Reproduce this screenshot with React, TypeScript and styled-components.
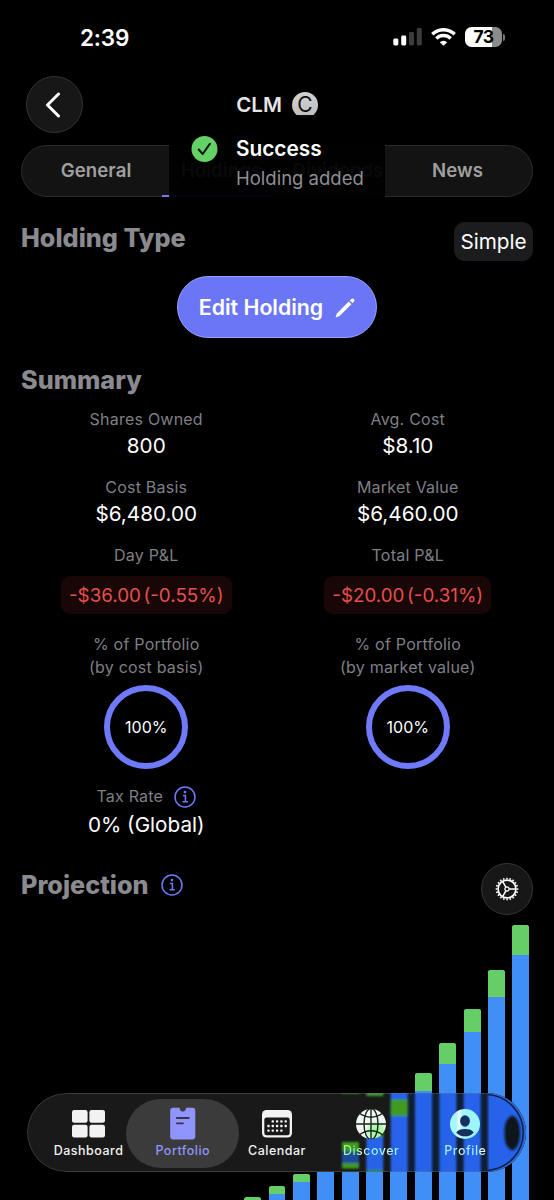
import React from "react";
import styled, { createGlobalStyle } from "styled-components";

const GlobalStyle = createGlobalStyle`
  * { box-sizing: border-box; }
  html, body { margin: 0; background: #000; }
  body {
    font-family: Inter, "Liberation Sans", sans-serif;
    color: #fff;
    overflow: hidden;
    -webkit-font-smoothing: antialiased;
  }
`;

const ACCENT = "#6f7afa";

const Screen = styled.main`
  position: relative;
  width: 554px;
  height: 1200px;
  overflow: hidden;
  background: #000;
  display: flex;
  flex-direction: column;
`;

const StatusBar = styled.div`
  height: 76px;
  flex: none;
  display: flex;
  justify-content: space-between;
  padding: 23px 49px 0 80px;
`;

const Clock = styled.span`
  font-size: 22.5px;
  font-weight: 600;
  line-height: 30px;
  letter-spacing: -0.2px;
`;

const StatusIcons = styled.div`
  display: flex;
  gap: 9px;
  height: 28px;
  align-items: center;
`;

const Battery = styled.div`
  display: flex;
  align-items: center;
  gap: 1px;
`;

const BatteryBody = styled.div`
  width: 37px;
  height: 20px;
  border-radius: 6.5px;
  background: linear-gradient(90deg, #fff 73%, #8b8b8b 73%);
  color: #000;
  font-size: 17.5px;
  font-weight: 700;
  line-height: 20px;
  text-align: center;
  letter-spacing: -0.6px;
`;

const BatteryCap = styled.div`
  width: 2px;
  height: 7px;
  border-radius: 0 2px 2px 0;
  background: #777;
`;

const NavBar = styled.header`
  height: 57px;
  flex: none;
  display: grid;
  grid-template-columns: 57px 1fr 57px;
  align-items: center;
  padding: 0 25.5px;
`;

const RoundButton = styled.button<{ $size: number }>`
  width: ${(p) => p.$size}px;
  height: ${(p) => p.$size}px;
  border-radius: 50%;
  border: 1px solid #343434;
  background: #171717;
  padding: 0;
  display: flex;
  align-items: center;
  justify-content: center;
`;

const NavTitle = styled.div`
  display: flex;
  align-items: center;
  justify-content: center;
  gap: 10px;
  font-size: 20.5px;
  font-weight: 600;
  color: #e4e4e4;
`;

const TickerBadge = styled.span`
  width: 26px;
  height: 26px;
  border-radius: 50%;
  background: linear-gradient(#d2d2d2, #bcbcbc);
  color: #111;
  font-size: 21px;
  font-weight: 400;
  line-height: 26px;
  text-align: center;
`;

const Segments = styled.nav`
  height: 52px;
  flex: none;
  margin: 12px 21px 0;
  padding: 0 21px 0 8px;
  border-radius: 26px;
  border: 1px solid #2b2b2b;
  background: #131313;
  display: grid;
  grid-template-columns: 132px 110px 132px 107px;
`;

const Segment = styled.button<{ $active?: boolean }>`
  border: 0;
  border-bottom: 2.5px solid ${(p) => (p.$active ? ACCENT : "transparent")};
  margin-bottom: -1px;
  padding: ${(p) => (p.$active ? "0 0 1px 8px" : "0 0 1px")};
  background: none;
  font: 600 18.6px/1 Inter, sans-serif;
  letter-spacing: 0.1px;
  color: #a0a0a0;
  white-space: nowrap;
`;

const Toast = styled.div`
  position: absolute;
  left: 169px;
  top: 115px;
  width: 216px;
  height: 85px;
  background: rgba(0, 0, 0, 0.945);
  display: flex;
  gap: 18px;
  padding: 20px 0 0 22px;
`;

const ToastText = styled.div`
  display: flex;
  flex-direction: column;
`;

const ToastTitle = styled.strong`
  font-size: 20.8px;
  font-weight: 600;
  line-height: 28px;
`;

const ToastMessage = styled.span`
  font-size: 18.5px;
  line-height: 30px;
  color: #8e8e93;
`;

const Section = styled.section`
  display: flex;
  flex-direction: column;
  flex: none;
`;

const SectionHead = styled.div<{ $height: number; $top: number; $lift?: number }>`
  height: ${(p) => p.$height}px;
  margin-top: ${(p) => p.$top}px;
  padding: 0 21px;
  display: flex;
  align-items: center;
  justify-content: space-between;

  h2 {
    margin-bottom: ${(p) => p.$lift ?? 0}px;
  }
`;

const Heading = styled.h2`
  margin: 0;
  font-size: 25.2px;
  font-weight: 800;
  line-height: 32px;
  color: #8a8a8f;
  display: flex;
  align-items: center;
  gap: 12px;
`;

const TypeChip = styled.span`
  width: 79px;
  height: 39px;
  border-radius: 11px;
  background: #1c1c1e;
  font-size: 20.7px;
  line-height: 40px;
  text-align: center;
`;

const EditButton = styled.button`
  align-self: center;
  margin-top: 15px;
  width: 200px;
  height: 62px;
  border-radius: 31px;
  border: 1px solid #979ffa;
  background: #6b76f7;
  color: #fff;
  font: 600 21.3px/1 Inter, sans-serif;
  display: flex;
  align-items: center;
  justify-content: center;
  gap: 12px;
  padding: 1px 0 0;
`;

const StatGrid = styled.div`
  display: grid;
  grid-template-columns: 1fr 1fr;
  padding: 0 15.5px;
  margin-top: 11.5px;
`;

const Stat = styled.div<{ $bottom: number }>`
  display: flex;
  flex-direction: column;
  align-items: center;
  padding-bottom: ${(p) => p.$bottom}px;
`;

const StatLabel = styled.span`
  font-size: 16px;
  line-height: 23px;
  letter-spacing: 0.22px;
  color: #7f7f84;
  text-align: center;
  white-space: pre-line;
  display: flex;
  align-items: center;
  gap: 11px;
`;

const StatValue = styled.span<{ $height?: number }>`
  font-size: 20.7px;
  line-height: ${(p) => p.$height ?? 29}px;
`;

const LossPill = styled.span`
  margin-top: 9.5px;
  height: 38px;
  padding: 0 8px;
  border-radius: 9px;
  background: #190606;
  color: #e5504d;
  font-size: 18.8px;
  line-height: 39px;
  word-spacing: -2.8px;
`;

const Ring = styled.div`
  margin-top: 6px;
  width: 84px;
  height: 84px;
  border-radius: 50%;
  border: 6.5px solid ${ACCENT};
  font-size: 16px;
  display: flex;
  align-items: center;
  justify-content: center;
`;

const Chart = styled.div`
  height: 275px;
  flex: none;
  margin-top: 10px;
  padding-right: 24.7px;
  display: flex;
  justify-content: flex-end;
  align-items: flex-end;
  gap: 7.5px;
`;

const Bar = styled.div`
  width: 16.9px;
  border-radius: 2.5px 2.5px 0 0;
  background: #3f8ff7;
  overflow: hidden;
`;

const BarGain = styled.div`
  background: #66ce66;
`;

const TabBar = styled.nav`
  position: absolute;
  left: 27px;
  top: 1093px;
  width: 499px;
  height: 79px;
  border-radius: 40px;
  background: #191919;
  overflow: hidden;
`;

const TabRow = styled.div`
  position: relative;
  height: 100%;
  display: grid;
  grid-template-columns: repeat(5, 94.2px);
  padding: 4.5px 0 0 13.5px;
  border-radius: 40px;
  border: 1px solid rgba(120, 125, 130, 0.35);
`;

const Tab = styled.button<{ $active?: boolean }>`
  height: 69px;
  width: 113px;
  justify-self: center;
  border: 0;
  border-radius: 35px;
  padding: 7.5px 0 0;
  background: ${(p) => (p.$active ? "#3b3b3b" : "none")};
  color: ${(p) => (p.$active ? "#8f95fc" : "#f2f2f2")};
  display: flex;
  flex-direction: column;
  align-items: center;
`;

const TabIcon = styled.span`
  height: 35px;
  display: flex;
  align-items: center;
`;

const TabLabel = styled.span<{ $tint?: string }>`
  font: 500 12.5px/18px Inter, sans-serif;
  letter-spacing: 0.5px;
  margin-top: 1px;
  ${(p) =>
    p.$tint &&
    `background: ${p.$tint}; background-clip: text; -webkit-background-clip: text; color: transparent;`}
`;

const Refraction = styled.svg`
  position: absolute;
  inset: 0;
`;

const BackIcon = styled.svg`
  margin-right: 3px;
`;

const InfoIcon = () => (
  <svg width="22" height="22" viewBox="0 0 22 22" fill="none" stroke={ACCENT}>
    <circle cx="11" cy="11" r="10" strokeWidth="1.5" />
    <path d="M9 9.4h2.4v6.2M8.5 15.7h5.4" strokeWidth="1.5" />
    <circle cx="11" cy="6.1" r="1.3" fill={ACCENT} stroke="none" />
  </svg>
);

const GearIcon = () => (
  <svg width="24" height="24" viewBox="-12 -12 24 24" fill="none" stroke="#fff">
    <circle r="8.9" strokeWidth="1.7" />
    <circle r="10.5" strokeWidth="1.7" pathLength="40" strokeDasharray="0.95 1.05" strokeDashoffset="0.5" />
    <circle r="2.1" strokeWidth="1.3" />
    <path d="M2.2 0H8.5M-1.1-1.9L-4.4-7.6M-1.1 1.9L-4.4 7.6" strokeWidth="1.5" />
  </svg>
);

const SignalIcon = () => (
  <svg width="29" height="18" viewBox="0 0 29 18">
    <rect x="0.3" y="10.5" width="5" height="7" rx="1.4" fill="#fff" />
    <rect x="8.2" y="7.5" width="5" height="10" rx="1.4" fill="#fff" />
    <rect x="16" y="4" width="5" height="13.5" rx="1.4" fill="#3c3c3c" />
    <rect x="23.8" y="0" width="5" height="17.5" rx="1.4" fill="#3c3c3c" />
  </svg>
);

const WifiIcon = () => (
  <svg width="25" height="18" viewBox="0 0 25 18" fill="none" stroke="#fff" strokeWidth="3.4">
    <path d="M1.3 6.3a15.9 15.9 0 0 1 22.4 0" />
    <path d="M5.3 10.5a10.3 10.3 0 0 1 14.4 0" />
    <path d="M12.5 17.8L8.8 14.2a5.3 5.3 0 0 1 7.4 0Z" fill="#fff" stroke="none" />
  </svg>
);

const PencilIcon = () => (
  <svg width="20" height="20" viewBox="0 0 20 20" fill="#fff">
    <path d="M.6 19.4l1.3-4L13.7 3.6l2.7 2.7L4.6 18.1z" />
    <path d="M14.8 2.5L16.4.9q1.3-1 2.4.2 1.2 1.2.2 2.4l-1.5 1.6z" />
  </svg>
);

const CheckIcon = () => (
  <svg width="27" height="27" viewBox="0 0 27 27">
    <circle cx="13.5" cy="14" r="13" fill="#63d165" />
    <path d="M7.7 14.5l4 4.5 7.3-10.3" fill="none" stroke="#0b160b" strokeWidth="2" strokeLinecap="round" strokeLinejoin="round" />
  </svg>
);

const DashboardIcon = () => (
  <svg width="33" height="28" viewBox="0 0 33 28" fill="#f2f2f2">
    <rect width="15.6" height="12.7" rx="2.2" />
    <rect x="17.4" width="15.6" height="12.7" rx="2.2" />
    <rect y="14.8" width="15.6" height="12.7" rx="2.2" />
    <rect x="17.4" y="14.8" width="15.6" height="12.7" rx="2.2" />
  </svg>
);

const PortfolioIcon = () => (
  <svg width="26" height="33" viewBox="0 0 26 33">
    <path
      d="M3 .8H9.3C9.9 .8 9.6 4.6 12.8 4.6S15.7 .8 16.3 .8H22.5A2.8 2.8 0 0 1 25.3 3.6V29.6A2.8 2.8 0 0 1 22.5 32.4H3A2.8 2.8 0 0 1 .2 29.6V3.6A2.8 2.8 0 0 1 3 .8Z"
      fill="#8f95fc"
    />
    <path d="M6.8 11h12M6.8 16.3H13" stroke="#36364d" strokeWidth="1.8" strokeLinecap="round" />
  </svg>
);

const CalendarIcon = () => {
  const dots = [
    [1, 0], [2, 0], [3, 0], [4, 0],
    [0, 1], [1, 1], [2, 1], [3, 1], [4, 1],
    [0, 2], [1, 2], [2, 2], [3, 2],
  ];
  return (
    <svg width="30" height="28" viewBox="0 0 30 28">
      <rect width="30" height="27.5" rx="4.5" fill="#f2f2f2" />
      <rect x="2.3" y="7.5" width="25.4" height="17.7" rx="2.2" fill="#191919" />
      {dots.map(([c, r]) => (
        <rect key={`${c}-${r}`} x={5.3 + c * 4.3} y={10.2 + r * 4.6} width="2.4" height="2.4" rx="0.7" fill="#f2f2f2" />
      ))}
    </svg>
  );
};

const GlobeIcon = () => (
  <svg width="30" height="30" viewBox="-15 -15 30 30">
    <defs>
      <radialGradient id="globe" gradientUnits="userSpaceOnUse" cx="5" cy="7" r="13">
        <stop offset="0" stopColor="#9ff59c" />
        <stop offset="0.5" stopColor="#b4f8b0" />
        <stop offset="0.85" stopColor="#f4f6f4" />
      </radialGradient>
    </defs>
    <circle r="15" fill="url(#globe)" />
    <g fill="none" stroke="#16251b" strokeWidth="1.4">
      <path d="M0-15V15M-15 0H15" />
      <ellipse rx="7" ry="15.5" />
      <path d="M-12-11Q0-2.5 12-11M-12 11Q0 2.5 12 11" />
    </g>
  </svg>
);

const ProfileIcon = () => (
  <svg width="30" height="30" viewBox="-15 -15 30 30">
    <defs>
      <linearGradient id="profile" x1="0" x2="1">
        <stop offset="0" stopColor="#a4f8ff" />
        <stop offset="0.2" stopColor="#a4f8ff" />
        <stop offset="0.3" stopColor="#f0f8fa" />
        <stop offset="0.42" stopColor="#9df5ff" />
        <stop offset="1" stopColor="#9df5ff" />
      </linearGradient>
    </defs>
    <circle r="15" fill="url(#profile)" />
    <ellipse cy="-3" rx="4.9" ry="5.7" fill="#16305f" />
    <path d="M-8.8 8.4Q-6.5 5 0 5T8.8 8.4Q5.3 12.3 0 12.3T-8.8 8.4z" fill="#16305f" />
  </svg>
);

/* Blurred bars seen through the floating tab bar, in page coordinates. */
const GlassBars = () => (
  <Refraction width="499" height="79" viewBox="27 1093 499 79">
    <defs>
      <filter id="soft" x="-10%" y="-10%" width="120%" height="120%">
        <feGaussianBlur stdDeviation="1.3" />
      </filter>
      <filter id="softer" x="-50%" y="-50%" width="200%" height="200%">
        <feGaussianBlur stdDeviation="1.2" />
      </filter>
    </defs>
    <rect x="408" y="1093" width="118" height="79" fill="#101e33" />
    <g filter="url(#soft)">
      <rect x="342" y="1142" width="17" height="9" fill="#3f9a20" />
      <rect x="342" y="1151" width="17" height="12" fill="#1f499c" />
      <rect x="342" y="1163" width="17" height="5.5" fill="#3f9a20" />
      <rect x="342" y="1092" width="17" height="2" fill="#2c651c" />
      <rect x="366.3" y="1092" width="17" height="4" fill="#3f9a30" />
      <rect x="366.3" y="1122" width="17" height="15" fill="#3f9a20" />
      <rect x="366.3" y="1137" width="17" height="33" fill="#2864e6" />
      <rect x="366.3" y="1170" width="17" height="3" fill="#2f8a40" />
      <rect x="390.7" y="1090" width="17" height="86" fill="#2864ea" />
      <rect x="390.7" y="1099.5" width="17" height="16.5" fill="#409b20" />
      <rect x="415" y="1090" width="17" height="86" fill="#2864ea" />
      <rect x="439.4" y="1090" width="17" height="86" fill="#2864ea" />
      <rect x="463.7" y="1090" width="17" height="86" fill="#2864ea" />
      <rect x="488" y="1090" width="40" height="86" fill="#2864ea" />
    </g>
    <path
      d="M512 1115.500C519 1117 520 1128 520 1133S519 1149 512 1150.500C505.500 1147 504.500 1141 504.500 1133S505.500 1119 512 1115.500Z"
      fill="#11151c"
      filter="url(#softer)"
    />
    <path d="M488 1094.6a38 38 0 0 1 0 75.8" fill="none" stroke="#0d2144" strokeWidth="1.5" strokeLinecap="round" />
  </Refraction>
);

const bars = [
  { height: 3, gain: 6 },
  { height: 13.5, gain: 7.5 },
  { height: 26, gain: 8.5 },
  { height: 39, gain: 10 },
  { height: 56, gain: 12 },
  { height: 76, gain: 14 },
  { height: 100, gain: 16 },
  { height: 126.5, gain: 18 },
  { height: 156.5, gain: 20.5 },
  { height: 190.7, gain: 23 },
  { height: 230, gain: 27 },
  { height: 275, gain: 30 },
];

const stats = [
  ["Shares Owned", "800"],
  ["Avg. Cost", "$8.10"],
  ["Cost Basis", "$6,480.00"],
  ["Market Value", "$6,460.00"],
];

const losses = [
  ["Day P&L", "-$36.00 (-0.55%)"],
  ["Total P&L", "-$20.00 (-0.31%)"],
];

const shares = ["% of Portfolio\n(by cost basis)", "% of Portfolio\n(by market value)"];

export default function App() {
  return (
    <Screen>
      <GlobalStyle />
      <StatusBar>
        <Clock>2:39</Clock>
        <StatusIcons>
          <SignalIcon />
          <WifiIcon />
          <Battery>
            <BatteryBody>73</BatteryBody>
            <BatteryCap />
          </Battery>
        </StatusIcons>
      </StatusBar>

      <NavBar>
        <RoundButton $size={57} aria-label="Back">
          <BackIcon width="16" height="26" viewBox="0 0 16 26">
            <path d="M13.5 2L2.5 13l11 11" fill="none" stroke="#fff" strokeWidth="3" strokeLinecap="round" strokeLinejoin="round" />
          </BackIcon>
        </RoundButton>
        <NavTitle>
          CLM<TickerBadge>C</TickerBadge>
        </NavTitle>
      </NavBar>

      <Segments>
        <Segment>General</Segment>
        <Segment $active>Holdings</Segment>
        <Segment>Dividends</Segment>
        <Segment>News</Segment>
      </Segments>

      <Section>
        <SectionHead $height={39} $top={25} $lift={8}>
          <Heading>Holding Type</Heading>
          <TypeChip>Simple</TypeChip>
        </SectionHead>
        <EditButton>
          Edit Holding
          <PencilIcon />
        </EditButton>
      </Section>

      <Section>
        <SectionHead $height={32} $top={26}>
          <Heading>Summary</Heading>
        </SectionHead>
        <StatGrid>
          {stats.map(([label, value]) => (
            <Stat key={label} $bottom={16}>
              <StatLabel>{label}</StatLabel>
              <StatValue>{value}</StatValue>
            </Stat>
          ))}
          {losses.map(([label, value]) => (
            <Stat key={label} $bottom={18.5}>
              <StatLabel>{label}</StatLabel>
              <LossPill>{value}</LossPill>
            </Stat>
          ))}
          {shares.map((label) => (
            <Stat key={label} $bottom={16.5}>
              <StatLabel>{label}</StatLabel>
              <Ring>100%</Ring>
            </Stat>
          ))}
          <Stat $bottom={0}>
            <StatLabel>
              Tax Rate
              <InfoIcon />
            </StatLabel>
            <StatValue $height={33}>0% (Global)</StatValue>
          </Stat>
        </StatGrid>
      </Section>

      <Section>
        <SectionHead $height={52} $top={21.5} $lift={7}>
          <Heading>
            Projection
            <InfoIcon />
          </Heading>
          <RoundButton $size={52} aria-label="Projection settings">
            <GearIcon />
          </RoundButton>
        </SectionHead>
        <Chart>
          {bars.map((bar) => (
            <Bar key={bar.height} style={{ height: bar.height }}>
              <BarGain style={{ height: bar.gain }} />
            </Bar>
          ))}
        </Chart>
      </Section>

      <Toast>
        <CheckIcon />
        <ToastText>
          <ToastTitle>Success</ToastTitle>
          <ToastMessage>Holding added</ToastMessage>
        </ToastText>
      </Toast>

      <TabBar>
        <GlassBars />
        <TabRow>
          <Tab>
            <TabIcon><DashboardIcon /></TabIcon>
            <TabLabel>Dashboard</TabLabel>
          </Tab>
          <Tab $active>
            <TabIcon><PortfolioIcon /></TabIcon>
            <TabLabel>Portfolio</TabLabel>
          </Tab>
          <Tab>
            <TabIcon><CalendarIcon /></TabIcon>
            <TabLabel>Calendar</TabLabel>
          </Tab>
          <Tab>
            <TabIcon><GlobeIcon /></TabIcon>
            <TabLabel $tint="linear-gradient(90deg, #a0f78c 28%, #e8fbf0 34%, #a0f5f4 43%, #a0f5f4 70%, #e8f8fa 76%, #a0f5fc 86%)">Discover</TabLabel>
          </Tab>
          <Tab>
            <TabIcon><ProfileIcon /></TabIcon>
            <TabLabel $tint="linear-gradient(90deg, #a4f2fc 34%, #eaf8fc 40%, #a4f2fc 50%, #a4f2fc 78%, #eaf8fc 86%)">Profile</TabLabel>
          </Tab>
        </TabRow>
      </TabBar>
    </Screen>
  );
}
